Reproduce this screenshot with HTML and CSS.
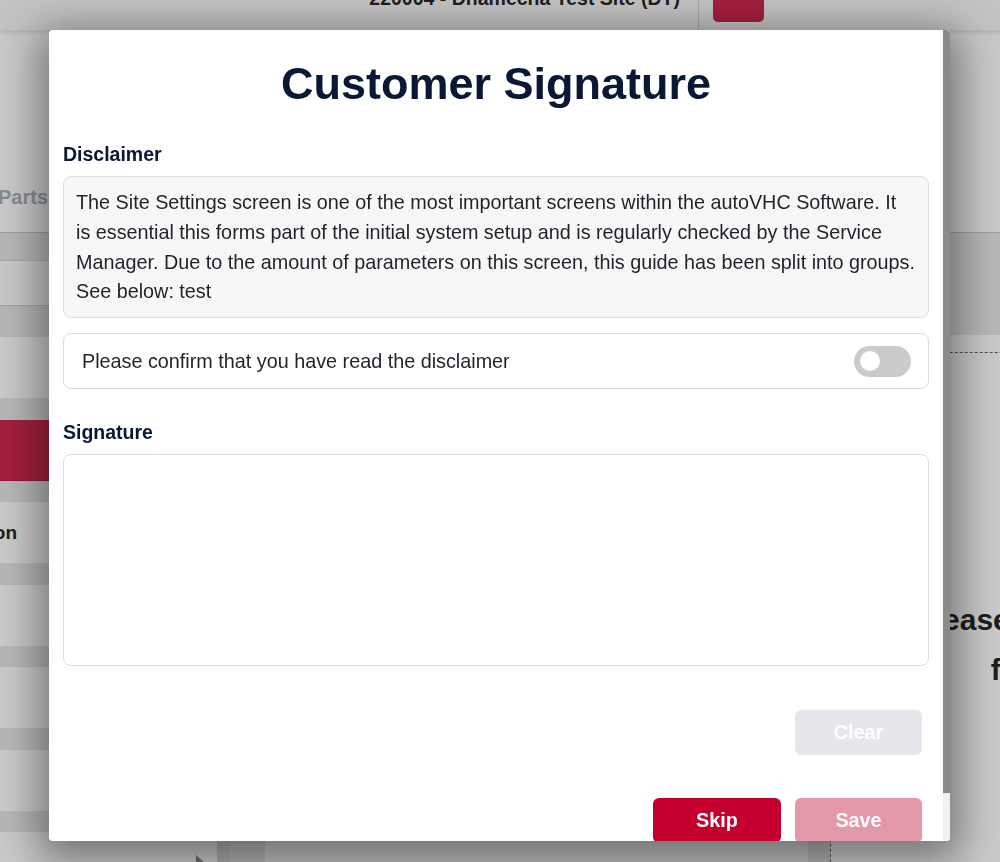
FILE: index.html
```html
<!DOCTYPE html>
<html lang="en">
<head>
<meta charset="utf-8">
<title>Customer Signature</title>
<link rel="stylesheet" href="styles.css">
</head>
<body>
<div class="page">
  <header class="topbar">
    <div class="site">220004 - Dhamecha Test Site (DT)</div>
    <div class="topbar-right">
      <div class="divider"></div>
      <div class="avatar"><span>DT</span></div>
    </div>
  </header>
  <div class="subheader">
    <nav class="tabs">
      <div class="tab-clip"><span>Labour</span><span>Parts</span></div>
    </nav>
  </div>
  <div class="main">
    <aside class="sidebar">
      <div class="side-head"></div>
      <div class="side-row"></div>
      <div class="side-gap"></div>
      <div class="side-list">
        <div class="side-item"></div>
        <div class="side-item active"></div>
        <div class="side-item"><div class="item-clip"><span>Inspection</span></div></div>
        <div class="side-item"></div>
        <div class="side-item"></div>
        <div class="side-item"></div>
        <div class="side-item last"><span class="arrow"></span></div>
      </div>
    </aside>
    <section class="center">
      <div class="panel"></div>
    </section>
    <section class="detail">
      <div class="detail-head"></div>
      <div class="detail-box">
        <p class="detail-msg">Please select a vehicle</p>
        <p class="detail-msg">from the list</p>
      </div>
    </section>
  </div>
</div>

<div class="overlay">
  <div class="modal">
    <div class="modal-body">
      <h1 class="modal-title">Customer Signature</h1>
      <div class="field-label">Disclaimer</div>
      <div class="disclaimer">The Site Settings screen is one of the most important screens within the autoVHC Software. It<br>is essential this forms part of the initial system setup and is regularly checked by the Service Manager. Due to the amount of parameters on this screen, this guide has been split into groups. See below: test</div>
      <div class="confirm-row">
        <span>Please confirm that you have read the disclaimer</span>
        <span class="toggle"><span class="knob"></span></span>
      </div>
      <div class="field-label sig-label">Signature</div>
      <div class="sig-pad"></div>
      <div class="btn-row clear-row">
        <button class="btn btn-clear" type="button">Clear</button>
      </div>
      <div class="btn-row action-row">
        <button class="btn btn-skip" type="button">Skip</button>
        <button class="btn btn-save" type="button">Save</button>
      </div>
    </div>
    <div class="scrollbar"><div class="thumb"></div></div>
  </div>
</div>
</body>
</html>
```
FILE: styles.css
```css
* { box-sizing: border-box; }
html, body {
  margin: 0;
  width: 1000px;
  height: 862px;
  overflow: hidden;
  font-family: "Liberation Sans", Arial, sans-serif;
  background: #c9c9c9;
}
.page { width: 1320px; height: 862px; }

/* ---------- dimmed background page ---------- */
.topbar {
  height: 30px;
  display: flex;
  background: #c3c3c3;
  box-shadow: 0 2px 6px rgba(0,0,0,0.14);
  position: relative;
  z-index: 1;
  overflow: hidden;
}
.site {
  margin-left: auto;
  margin-top: -13px;
  font-size: 19.5px;
  font-weight: bold;
  line-height: 22px;
  color: #1f1f1f;
  white-space: nowrap;
}
.topbar-right {
  width: 640px;
  display: flex;
  align-items: flex-start;
}
.divider { width: 1px; height: 30px; background: #a8a8a8; margin-left: 18px; }
.avatar {
  width: 51px;
  height: 22px;
  margin-left: 14px;
  background: #a31f3d;
  border-radius: 0 0 5px 5px;
  overflow: hidden;
  color: #f0d0d6;
  font-weight: bold;
  font-size: 18px;
  line-height: 20px;
  text-align: center;
}
.avatar span { display: block; margin-top: -18px; }

.subheader {
  height: 203px;
  background: #c9c9c9;
  border-bottom: 1px solid #9e9e9e;
  padding-top: 155px;
}
.tabs { display: flex; }
.tab-clip {
  width: 48px;
  display: flex;
  justify-content: flex-end;
  gap: 30px;
  white-space: nowrap;
  font-size: 20px;
  font-weight: bold;
  line-height: 24px;
  color: #878c93;
}

.main { display: flex; height: 629px; overflow: hidden; }
.sidebar {
  width: 230px;
  flex: none;
  background: #b7b7b7;
  border-right: 13px solid #adadad;
  display: flex;
  flex-direction: column;
  overflow: hidden;
}
.sidebar > * { flex: none; }
.side-head { height: 27px; }
.side-row {
  height: 46px;
  background: #c8c8c8;
  border-top: 1px solid #a9a9a9;
  border-bottom: 1px solid #a3a3a3;
}
.side-gap { height: 31px; }
.side-list { display: flex; flex-direction: column; gap: 21.5px; }
.side-item {
  height: 61px;
  flex: none;
  background: #c9c9c9;
  display: flex;
  align-items: center;
}
.side-item.active { background: #a31f3d; border-bottom: 1px solid #8f1a35; }
.item-clip {
  width: 17px;
  display: flex;
  justify-content: flex-end;
  white-space: nowrap;
  font-size: 19px;
  font-weight: bold;
  color: #1c1c1c;
}
.side-item.last { align-items: flex-start; justify-content: flex-end; padding: 23px 11px 0 0; }
.arrow {
  width: 0; height: 0;
  border-top: 9px solid transparent;
  border-bottom: 9px solid transparent;
  border-left: 10px solid #6e6e6e;
}

.center {
  width: 600px;
  flex: none;
  background: #b3b3b3;
  padding: 24px 22px 0 35px;
}
.panel { height: 640px; background: #c2c2c2; border-radius: 8px; }

.detail { width: 492px; flex: none; background: #cacaca; }
.detail-head { height: 102px; background: #b8b8b8; }
.detail-box {
  margin-top: 17px;
  height: 600px;
  border-top: 1px dashed #4e4e4e;
  border-left: 1px dashed #4e4e4e;
  padding-top: 242px;
}
.detail-msg {
  margin: 0;
  text-align: center;
  font-size: 30px;
  font-weight: bold;
  line-height: 50px;
  color: #1d1d1d;
}

/* ---------- modal ---------- */
.overlay { position: fixed; inset: 0; z-index: 10; }
.modal {
  position: absolute;
  left: 49px;
  top: 30px;
  width: 901px;
  height: 811px;
  display: flex;
  background: #fff;
  border-radius: 4px;
  overflow: hidden;
  box-shadow: 0 10px 40px 10px rgba(0,0,0,0.42);
}
.modal-body {
  flex: 1;
  min-width: 0;
  padding: 27px 14px 0 14px;
  overflow: hidden;
}
.scrollbar { width: 7px; background: #f1f1f1; flex: none; }
.thumb { height: 763px; background: #8a8a8a; }

.modal-title {
  margin: 0;
  text-align: center;
  font-size: 45px;
  line-height: 54px;
  font-weight: bold;
  color: #0a1836;
}
.field-label {
  margin: 32px 0 10px;
  font-size: 19.5px;
  line-height: 23.4px;
  font-weight: bold;
  color: #0a1836;
}
.disclaimer {
  background: #f7f7f7;
  border: 1px solid #dcdcdc;
  border-radius: 8px;
  padding: 11px 10px 10px 12px;
  font-size: 19.8px;
  line-height: 1.5;
  color: #1e2329;
}
.confirm-row {
  margin-top: 15px;
  height: 56px;
  border: 1px solid #dcdcdc;
  border-radius: 8px;
  display: flex;
  align-items: center;
  justify-content: space-between;
  padding: 0 17px 0 18px;
  font-size: 19.8px;
  color: #1e2329;
}
.toggle {
  width: 57px;
  height: 31px;
  border-radius: 16px;
  background: #cbcbcb;
  display: flex;
  align-items: center;
  padding-left: 6px;
}
.knob { width: 20px; height: 20px; border-radius: 50%; background: #fff; }
.sig-label { margin: 32px 0 9px; }
.sig-pad {
  height: 212px;
  border: 1px solid #dcdcdc;
  border-radius: 8px;
  background: #fff;
}
.btn-row { display: flex; justify-content: flex-end; gap: 14px; padding-right: 7px; }
.clear-row { margin-top: 44px; }
.action-row { margin-top: 43px; }
.btn {
  width: 127px;
  height: 45px;
  border: 0;
  border-radius: 6px;
  font-family: inherit;
  font-size: 19.8px;
  font-weight: bold;
  color: #fff;
  padding: 0;
}
.btn-clear { background: #e5e7eb; }
.btn-skip { background: #c5002f; width: 128px; }
.btn-save { background: #e499a8; }
```
